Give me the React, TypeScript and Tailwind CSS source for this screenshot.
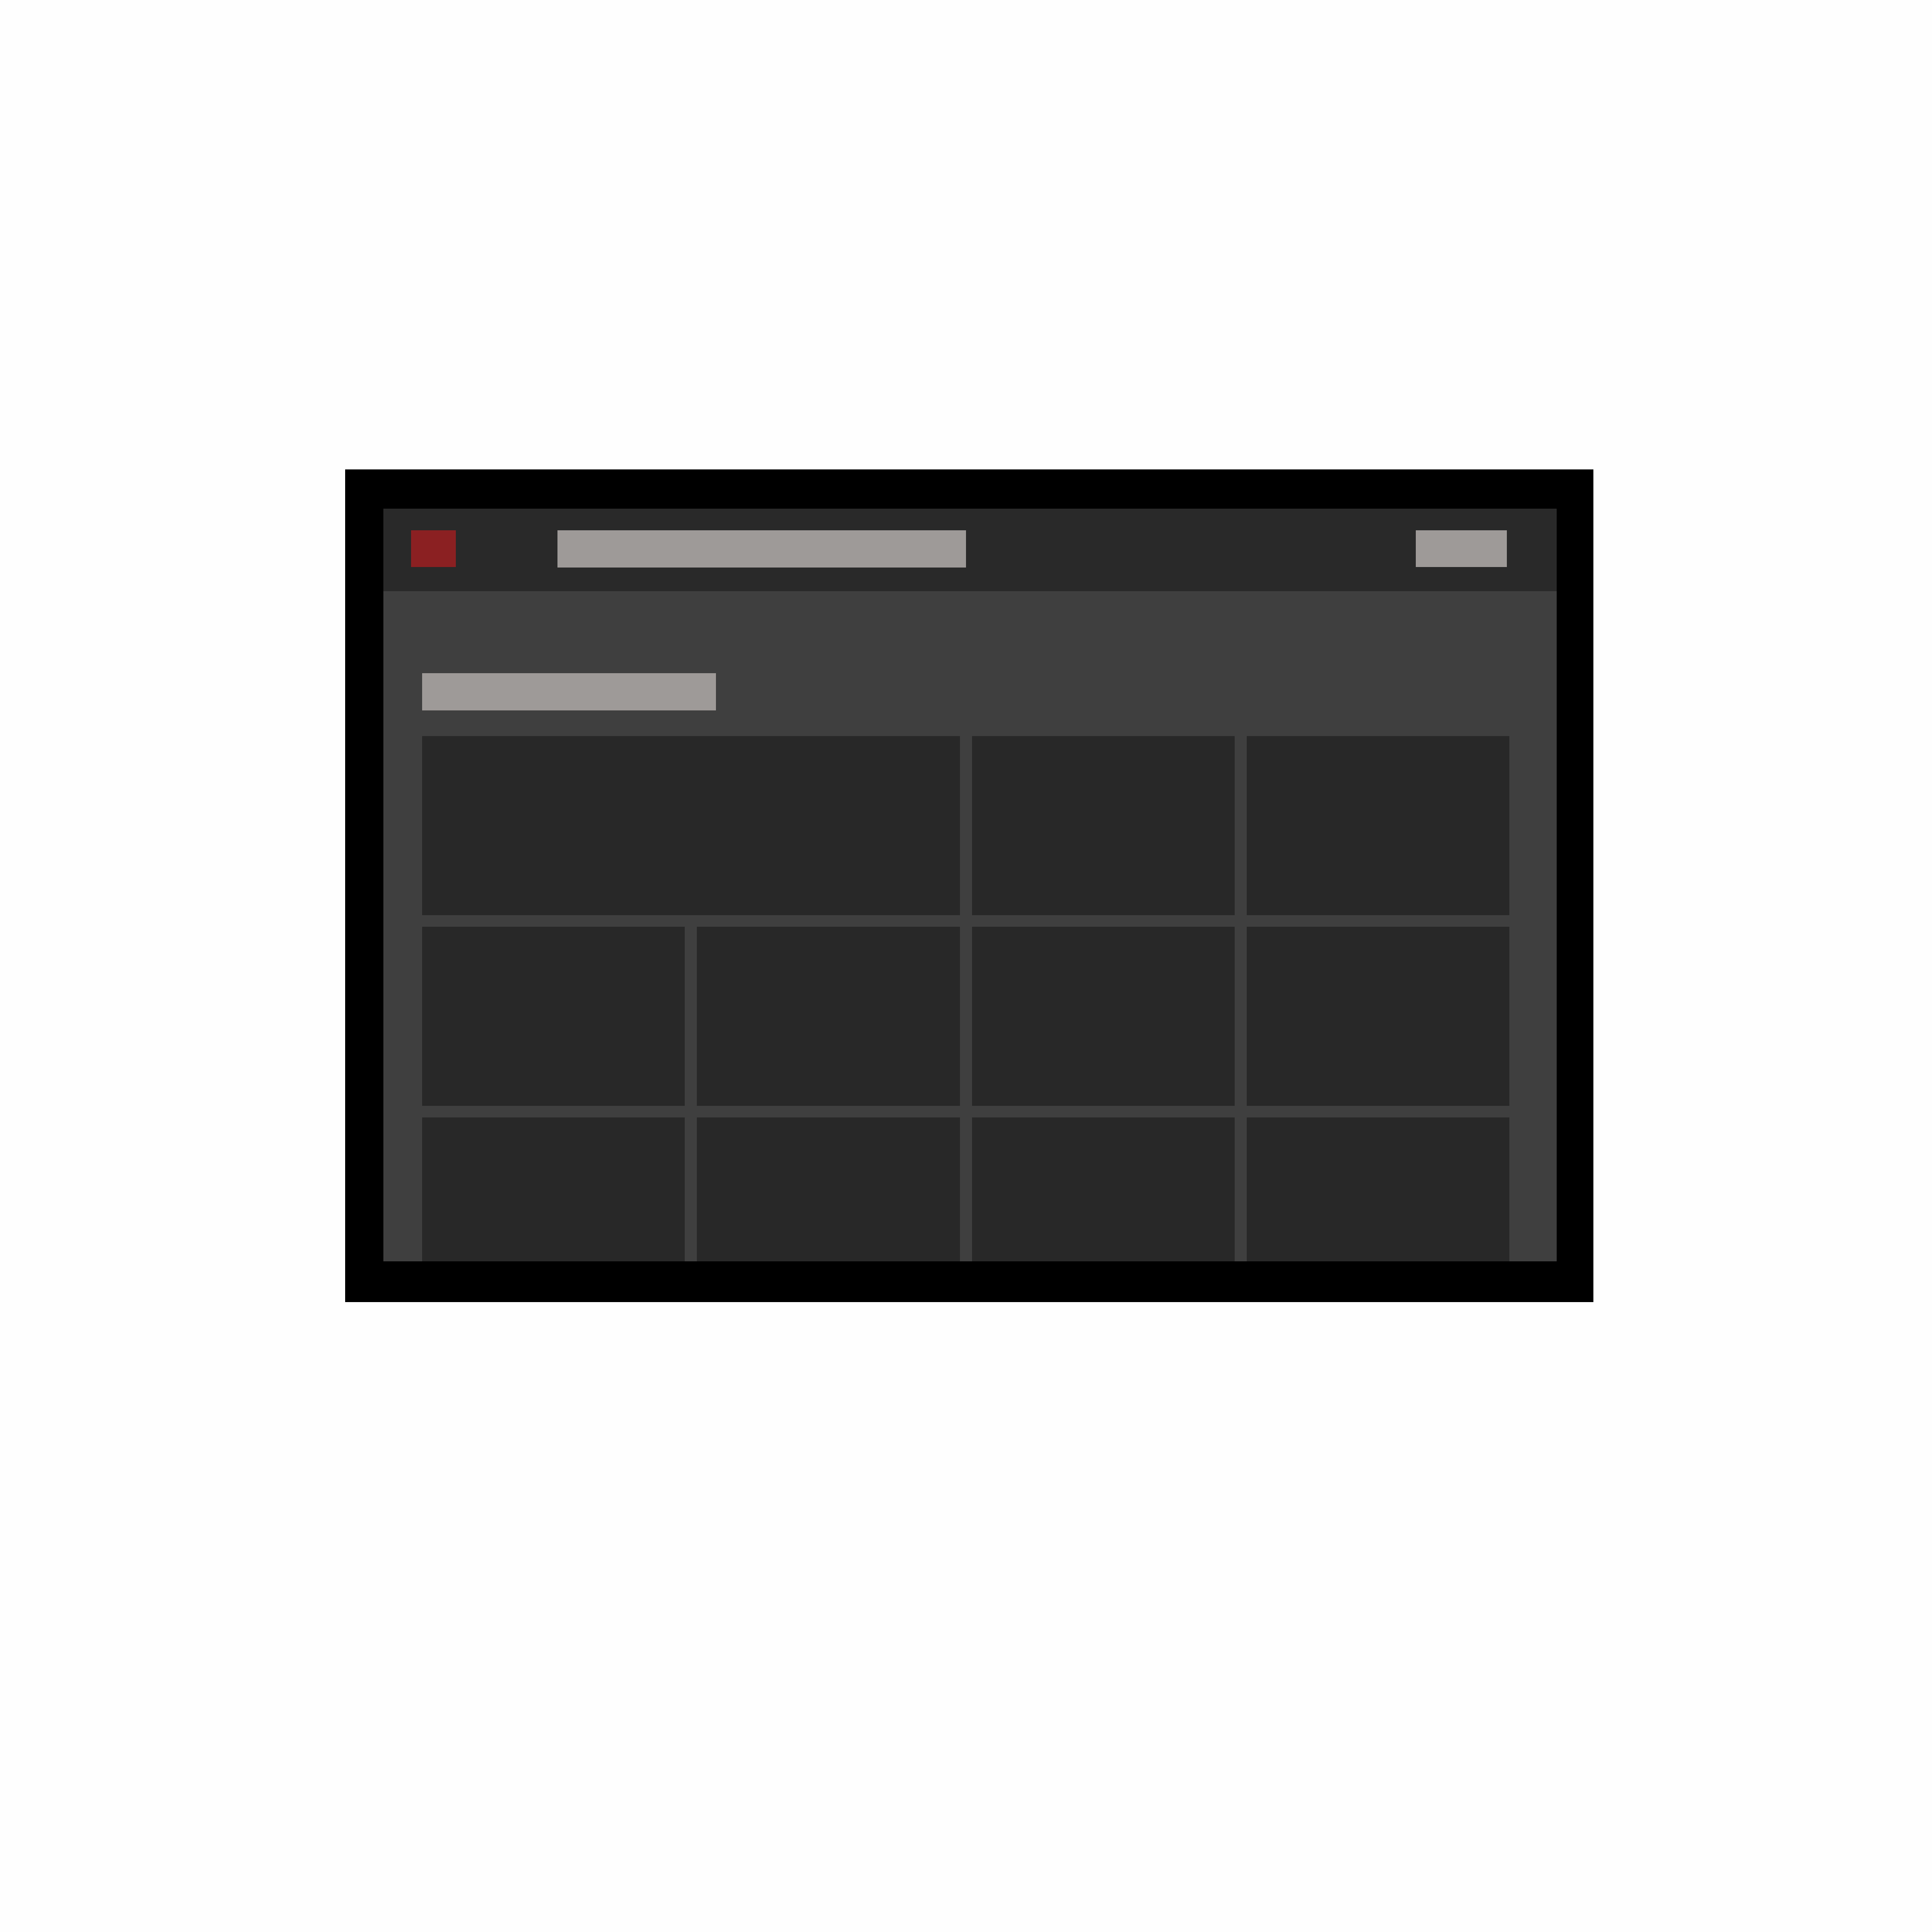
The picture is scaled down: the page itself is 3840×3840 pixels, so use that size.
const rows = [
  ["wide", "a", "b"],
  ["c", "d", "e", "f"],
  ["g", "h", "i", "j"],
];

export default function App() {
  return (
    <div className="w-[3840px] h-[3840px] bg-[#fefefe] pt-[933px] pl-[686px]">
      {/* TV frame */}
      <div className="w-[2481px] h-[1655px] bg-black pt-[78px] pl-[76px]">
        {/* Screen */}
        <div className="w-[2332px] h-[1496px] bg-[#3f3f3f] overflow-hidden flex flex-col">
          {/* Top bar */}
          <div className="h-[164px] shrink-0 bg-[#292929] flex items-start pt-[43px]">
            <div className="ml-[55px] w-[89px] h-[73px] bg-[#8b2022]" />
            <div className="ml-[202px] w-[812px] h-[74px] bg-[#9e9a98]" />
            <div className="ml-auto mr-[99px] w-[181px] h-[73px] bg-[#9e9a98]" />
          </div>

          {/* Content */}
          <div className="pl-[77px] pr-[94px] pt-[163px]">
            <div className="w-[584px] h-[74px] bg-[#9e9a98]" />
            <div className="mt-[51px] grid grid-cols-4 gap-x-[24px] gap-y-[23px] auto-rows-[356px]">
              {rows.flat().map((id) => (
                <div
                  key={id}
                  className={id === "wide" ? "col-span-2 bg-[#282828]" : "bg-[#282828]"}
                />
              ))}
            </div>
          </div>
        </div>
      </div>
    </div>
  );
}
